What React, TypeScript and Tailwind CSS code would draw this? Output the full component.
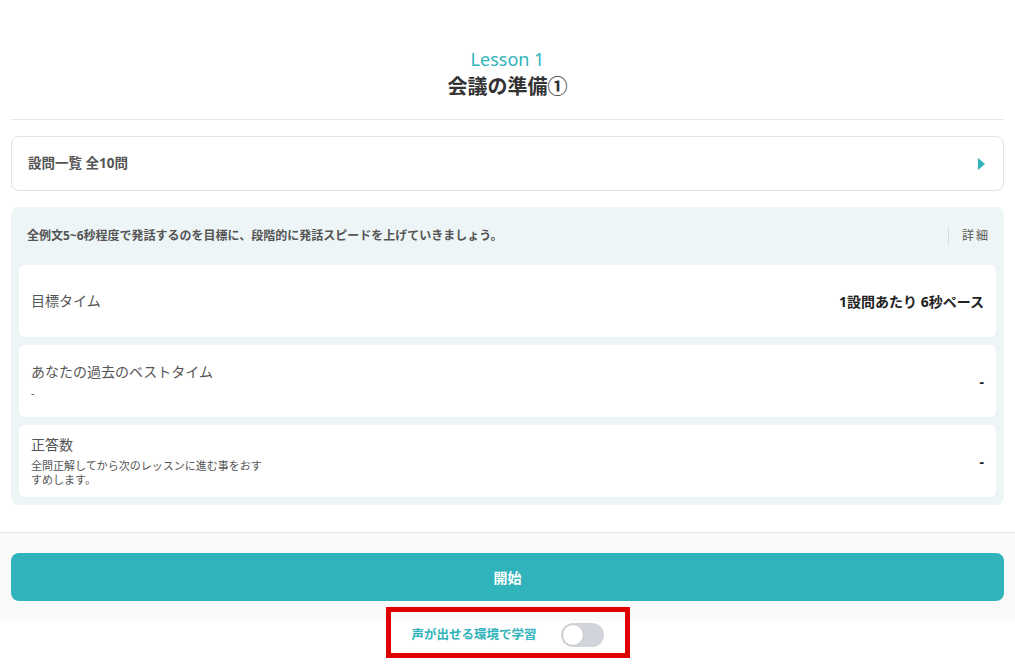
const font = { fontFamily: '"Noto Sans", "Noto Sans CJK JP", sans-serif' };

function Row({
  title,
  sub,
  value,
}: {
  title: string;
  sub?: string;
  value: string;
}) {
  return (
    <div className="flex h-[72px] items-center justify-between rounded-[6px] bg-white pl-3 pr-3">
      <div className="flex flex-col">
        <div className="text-[14px] leading-[18px] text-[#555]">{title}</div>
        {sub && (
          <div className="mt-[5px] w-[240px] text-[11px] leading-[14px] text-[#555]">{sub}</div>
        )}
      </div>
      <div className="text-[14px] font-bold text-[#222]">{value}</div>
    </div>
  );
}

export default function App() {
  return (
    <div className="min-h-[664px] w-full bg-white" style={font}>
      <div className="flex flex-col items-center pt-[46px]">
        <div className="text-[18px] leading-[26px] text-[#30b3ba]">Lesson 1</div>
        <div className="mt-[2px] text-[20px] font-bold leading-[26px] text-[#333]">会議の準備①</div>
      </div>
      <div className="mx-[11px] mt-[19px] border-t border-[#e6e6e6]" />

      <div className="px-[11px] pt-[16px]">
        <div className="flex h-[55px] items-center justify-between rounded-[8px] border border-[#e2e2e2] bg-white pl-4 pr-[18px]">
          <span className="text-[13.5px] font-bold text-[#555]">設問一覧 全10問</span>
          <svg width="7" height="12" viewBox="0 0 7 12">
            <path d="M0 0 L7 6 L0 12 Z" fill="#30b3ba" />
          </svg>
        </div>

        <div className="mt-[16px] rounded-[8px] bg-[#edf5f7] px-2 pb-2">
          <div className="flex h-[58px] items-center justify-between pl-2 pr-[6px]">
            <span className="text-[12px] font-bold text-[#555]">
              全例文5~6秒程度で発話するのを目標に、段階的に発話スピードを上げていきましょう。
            </span>
            <span className="border-l border-[#d8dde0] pl-[13px] text-[12px] tracking-[2px] text-[#555]">
              詳細
            </span>
          </div>
          <div className="flex flex-col gap-2">
            <Row title="目標タイム" value="1設問あたり 6秒ペース" />
            <Row title="あなたの過去のベストタイム" sub="-" value="-" />
            <Row
              title="正答数"
              sub="全問正解してから次のレッスンに進む事をおすすめします。"
              value="-"
            />
          </div>
        </div>
      </div>

      <div className="mt-[27px] border-t border-[#e6e6e6] bg-[#fafafa] px-[11px] pb-[20px] pt-[20px]">
        <button className="flex h-[48px] w-full items-center justify-center rounded-[8px] bg-[#30b3ba] text-[14px] font-bold text-white">
          開始
        </button>
      </div>

      <div className="relative flex items-center justify-center gap-[24px] pt-[2px]">
        <div className="absolute left-1/2 top-[-14px] h-[51px] w-[244px] -translate-x-1/2 border-[5px] border-[#e00000]" />
        <span className="text-[12.5px] font-bold text-[#30b3ba]">声が出せる環境で学習</span>
        <span className="relative inline-flex h-[24px] w-[43px] items-center rounded-full bg-[#d1d5db]">
          <span className="ml-[1px] h-[22px] w-[22px] rounded-full border border-[#c8c8c8] bg-white" />
        </span>
      </div>
    </div>
  );
}
